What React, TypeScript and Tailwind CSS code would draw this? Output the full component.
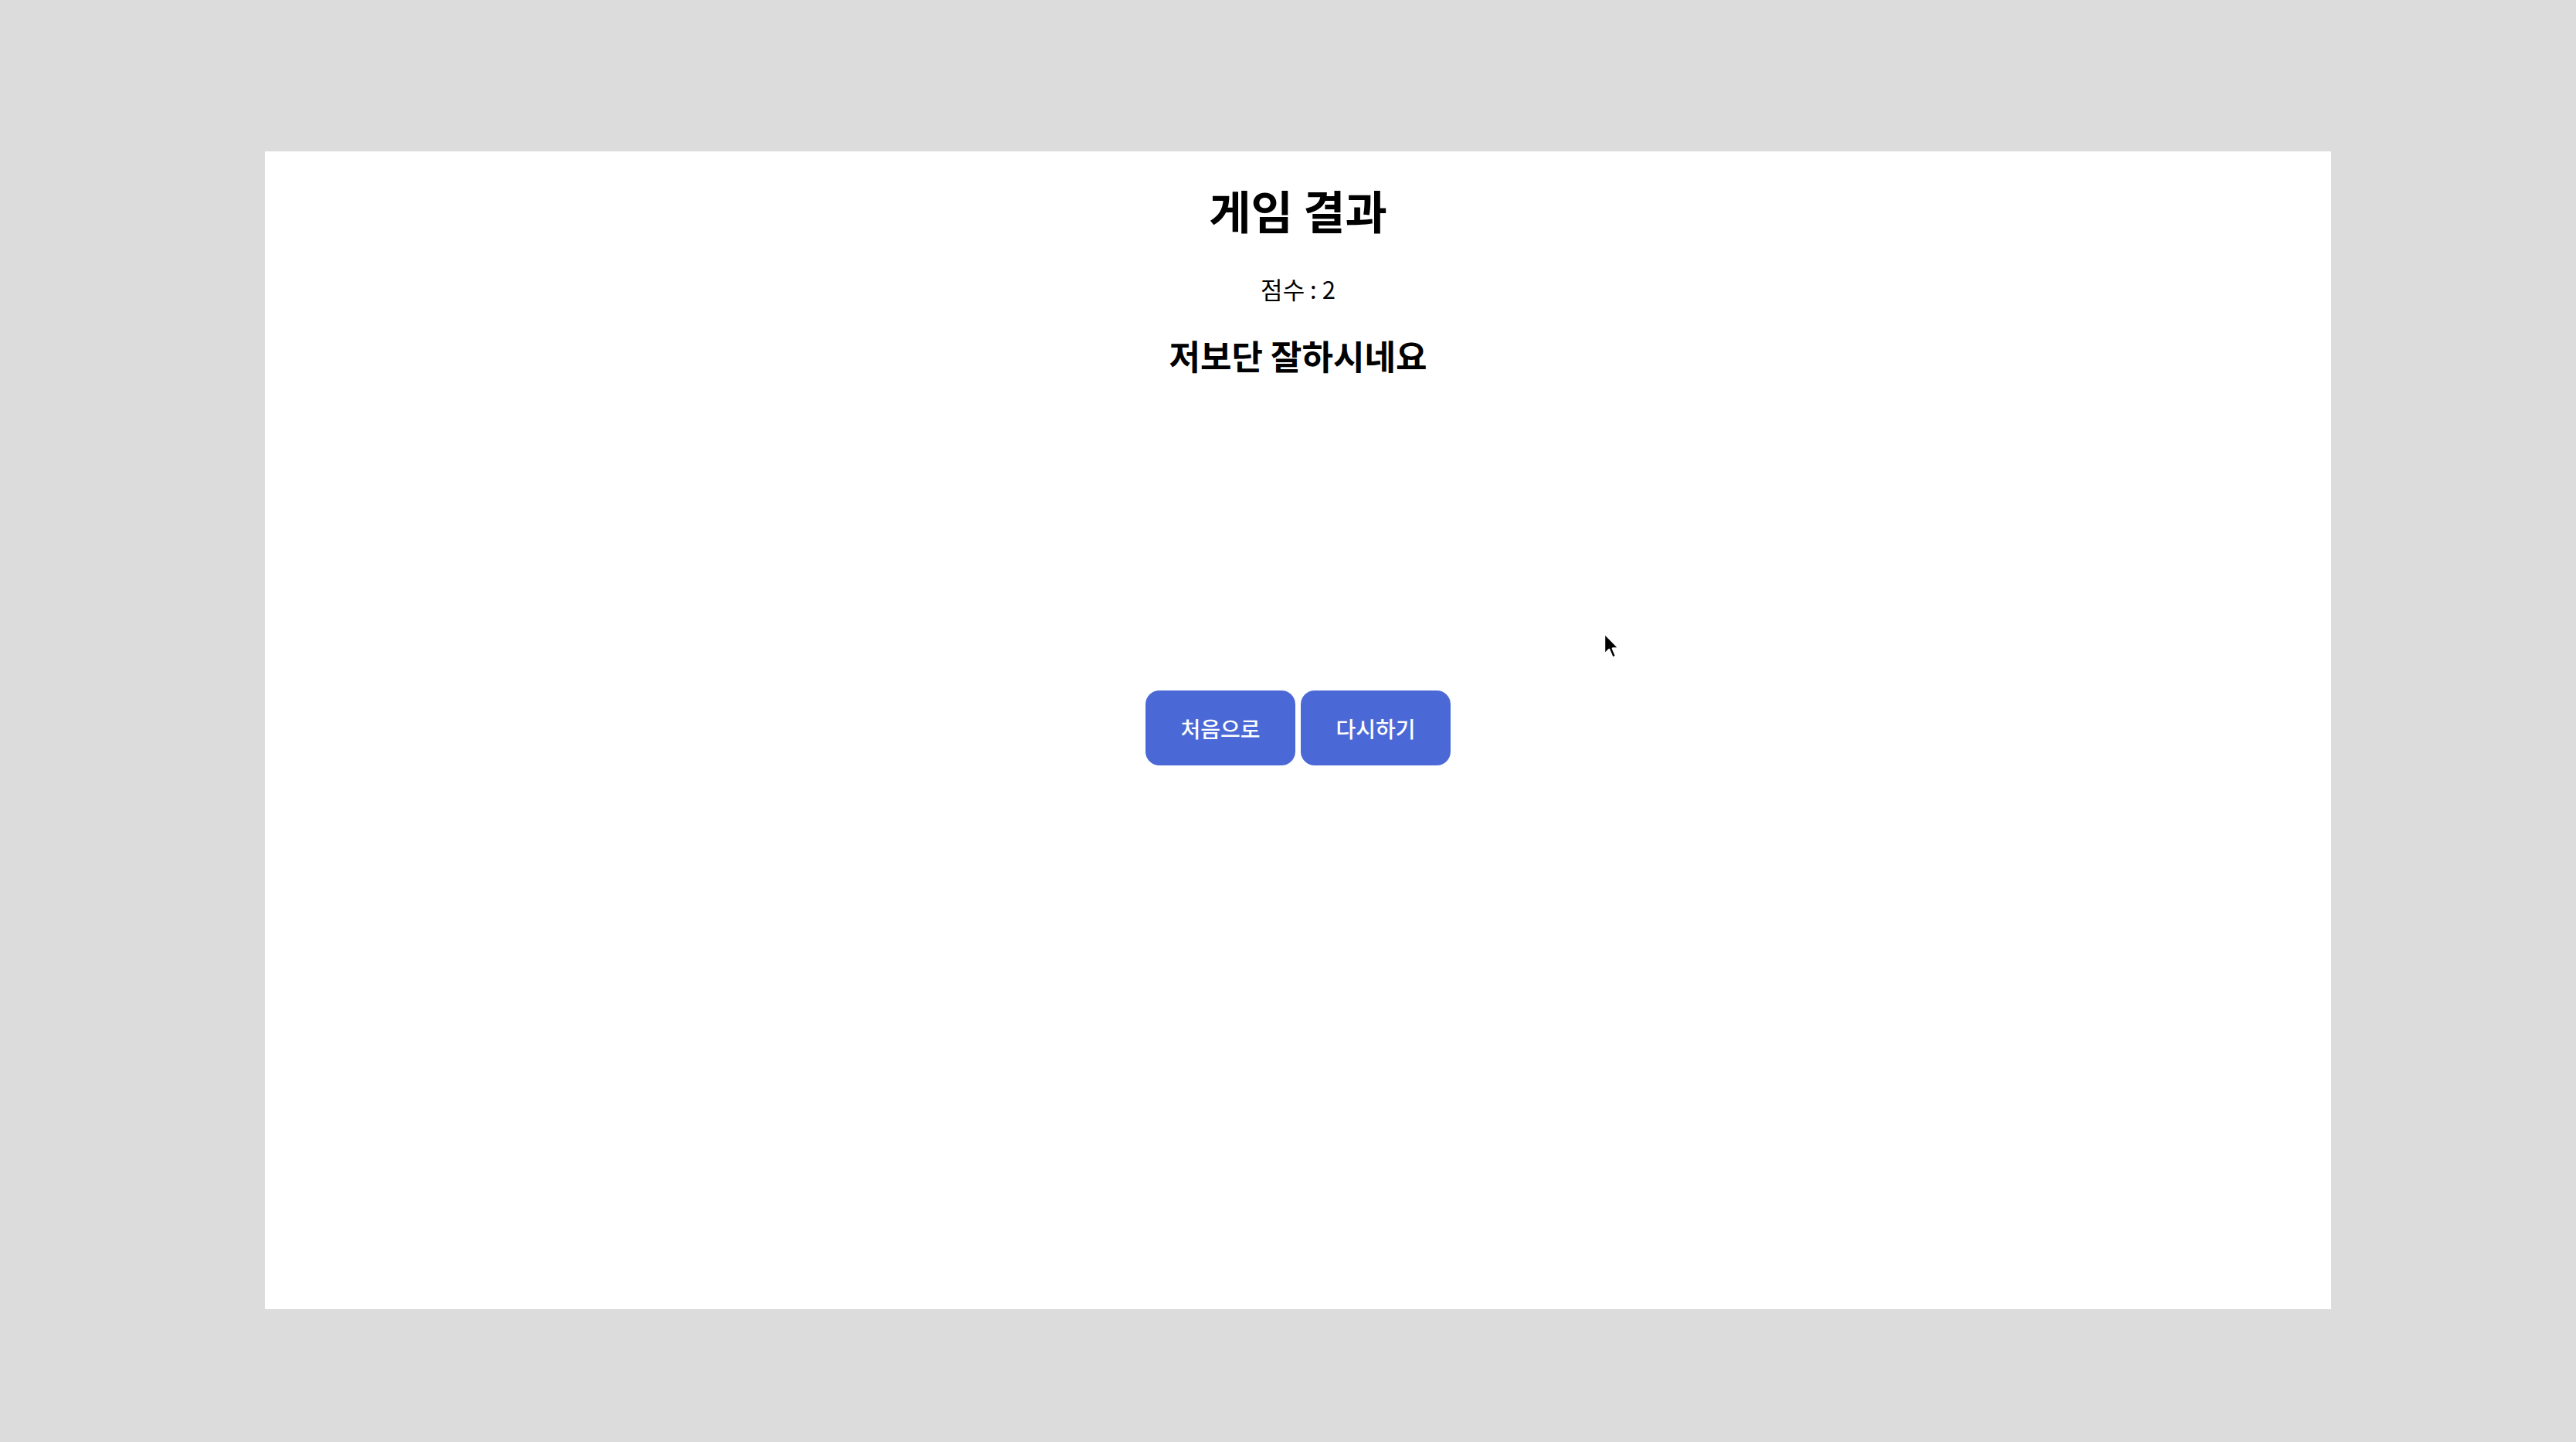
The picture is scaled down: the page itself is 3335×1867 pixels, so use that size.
import React from "react";

const font = { fontFamily: '"Noto Sans CJK KR", "Noto Sans", sans-serif' };

function Cursor() {
  return (
    <svg
      className="absolute left-[2072px] top-[817px]"
      width="28"
      height="40"
      viewBox="0 0 24 36"
    >
      <path
        d="M4 3 L4 27 L9.5 21.5 L13.5 31 L17.5 29.3 L13.6 20.2 L21 20.2 Z"
        fill="#000"
        stroke="#fff"
        strokeWidth="2"
        strokeLinejoin="round"
      />
    </svg>
  );
}

export default function App() {
  return (
    <div
      className="relative min-h-[1867px] w-[3335px] bg-[#dcdcdc] pt-[196px] pl-[343px]"
      style={font}
    >
      <div className="flex h-[1499px] w-[2675px] flex-col items-center bg-white">
        <div className="flex flex-col items-center text-black">
          <h1 className="mt-[46px] text-[59px] font-bold leading-none">게임 결과</h1>
          <p className="mt-[57px] text-[31px] leading-none">점수 : 2</p>
          <h2 className="mt-[49px] text-[44px] font-bold leading-none">저보단 잘하시네요</h2>
        </div>

        <div className="mt-[412px] flex gap-[7px]">
          <button className="h-[97px] w-[194px] rounded-[18px] bg-[#4a69d6] text-[28px] font-medium text-white">
            처음으로
          </button>
          <button className="h-[97px] w-[194px] rounded-[18px] bg-[#4a69d6] text-[28px] font-medium text-white">
            다시하기
          </button>
        </div>
      </div>
      <Cursor />
    </div>
  );
}
